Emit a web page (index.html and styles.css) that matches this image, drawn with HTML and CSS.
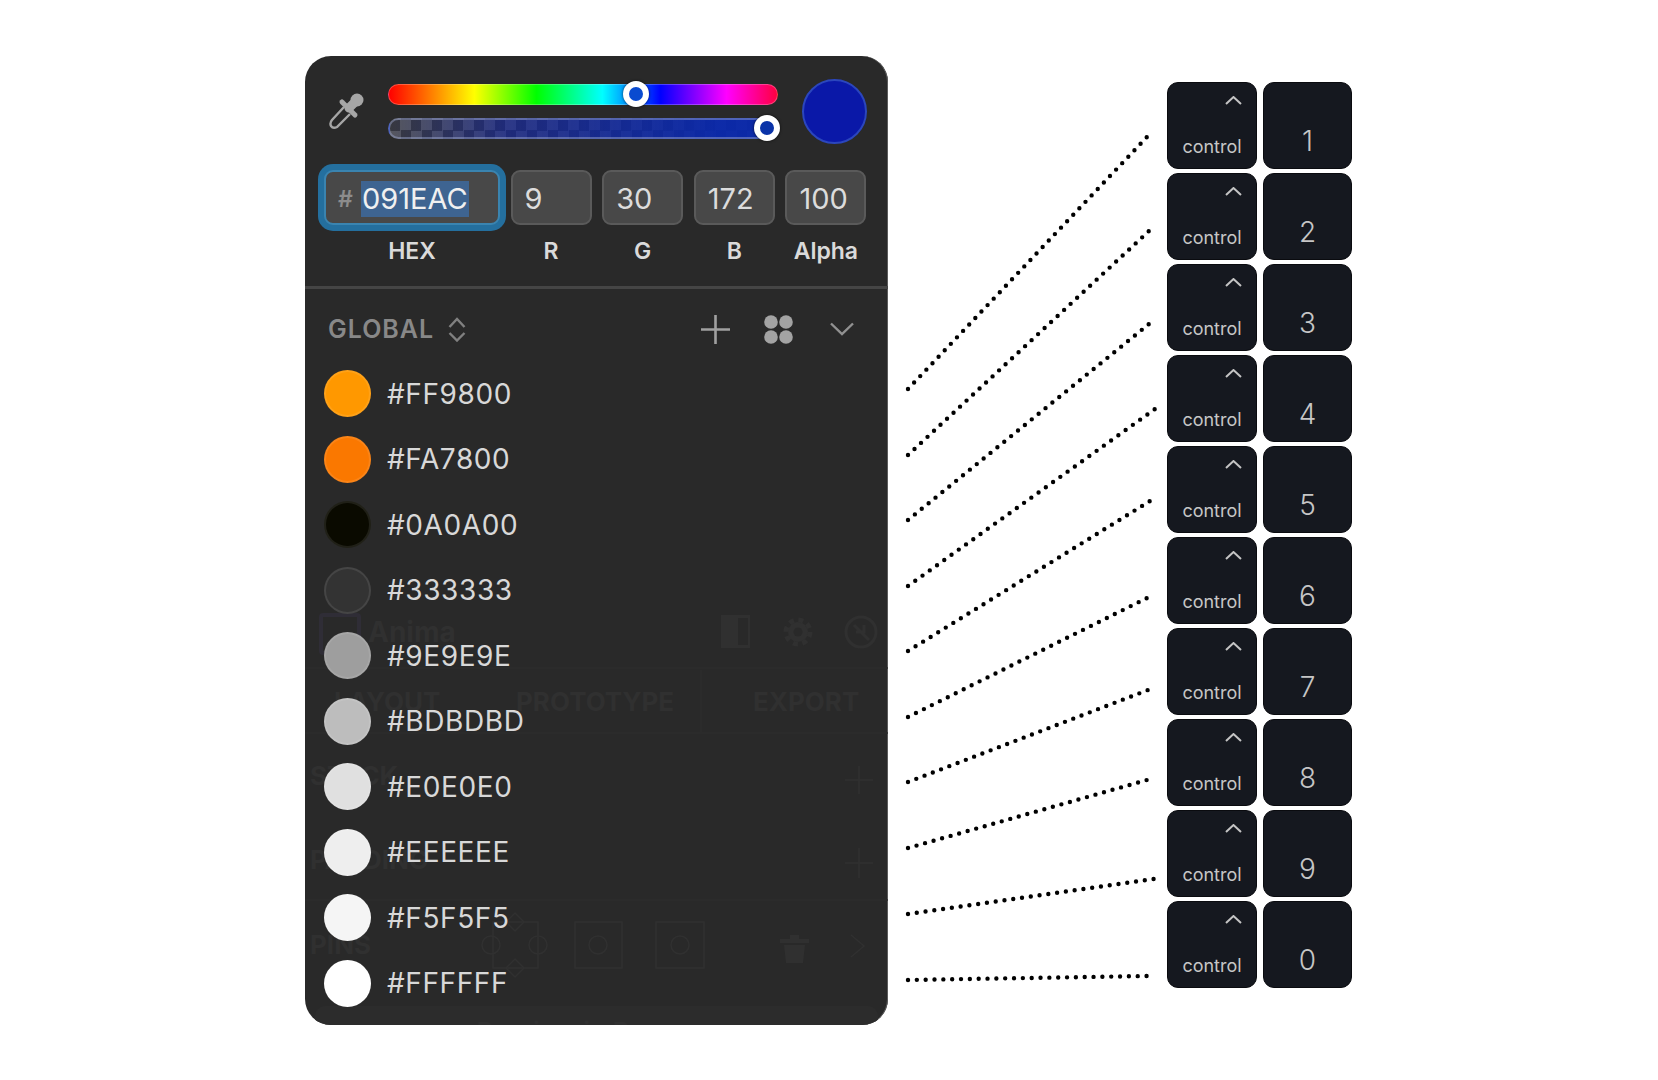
FILE: index.html
```html
<!DOCTYPE html>
<html>
  <head>
    <meta charset="utf-8">
    <title>Color picker shortcuts</title>
    <link rel="stylesheet" href="styles.css">
  </head>
  <body>
    <svg class="defs" width="0" height="0">
      <symbol id="caret" viewBox="0 0 17 9">
        <path d="M1 8 L8.5 1 L16 8" fill="none" stroke="#c4c4c4" stroke-width="2"/>
      </symbol>
    </svg>
    <div class="stage">
      <!-- Color picker panel -->
      <div class="panel">
        <!-- Plugin UI showing faintly through the panel -->
        <div class="ghost">
          <div class="ghost-logo"></div>
          <span class="ghost-text g-anima">Anima</span>
          <svg class="ghost-icons" width="583" height="969" viewBox="305 56 583 969">
            <g fill="#303030">
              <path d="M721 615h29v33h-29z"/>
              <circle cx="798" cy="632" r="10"/>
              <path d="M780 939h29v4h-29zM790 935h9v4h-9zM784 945h21l-2 18h-17z"/>
            </g>
            <circle cx="798" cy="632" r="12" fill="none" stroke="#303030" stroke-width="5" stroke-dasharray="5 4.420"/>
            <path d="M738 618h10v27h-10z" fill="#292929"/>
            <circle cx="798" cy="632" r="4.500" fill="#292929"/>
            <circle cx="861" cy="632" r="15" fill="none" stroke="#303030" stroke-width="3"/>
            <path d="M854 625l15 15M856 632h8v-7" fill="none" stroke="#303030" stroke-width="3"/>
            <path d="M305 668h583M305 733h583M701 670v63M305 900h583" fill="none" stroke="#2c2c2c" stroke-width="1.500"/>
            <g fill="none" stroke="#303030" stroke-width="1.500">
              <path d="M845 780h28M859 766v28M845 863h28M859 848v30"/>
              <path d="M851 935l13 11-13 11"/>
              <path d="M493 922h45v46h-45zM575 922h47v46h-47zM656 922h48v46h-48z"/>
              <circle cx="491" cy="945" r="9"/>
              <circle cx="538" cy="945" r="9"/>
              <circle cx="598" cy="945" r="9"/>
              <circle cx="680" cy="945" r="9"/>
              <path d="M515 913l9 9-9 9-9-9zM515 959l9 9-9 9-9-9z"/>
            </g>
          </svg>
          <span class="ghost-text g-layout">LAYOUT</span>
          <span class="ghost-text g-proto">PROTOTYPE</span>
          <span class="ghost-text g-export">EXPORT</span>
          <span class="ghost-text g-stack">STACK</span>
          <span class="ghost-text g-padding">PADDING</span>
          <span class="ghost-text g-pins">PINS</span>
          <div class="ghost-button">Preview in Browser</div>
        </div>

        <div class="picker">
          <svg class="dropper" width="36" height="37" viewBox="0 0 36 37">
            <path d="M15 14 L3 27 Q0.500 30 2 33 Q4 36 8 34 L21 21" fill="none" stroke="#a6a6a6" stroke-width="2.400"/>
            <path d="M13 9 L26 22" stroke="#a6a6a6" stroke-width="5" stroke-linecap="round"/>
            <path d="M20 15 L28 7" stroke="#a6a6a6" stroke-width="9" stroke-linecap="round"/>
            <circle cx="28" cy="7" r="6.500" fill="#a6a6a6"/>
          </svg>
          <div class="sliders">
            <div class="bar hue"><span class="thumb thumb-hue"></span></div>
            <div class="bar alpha"><span class="thumb thumb-alpha"></span></div>
          </div>
          <div class="current"></div>
        </div>

        <div class="fields">
          <div class="field hex"><span class="hash">#</span><span class="selected">091EAC</span></div>
          <div class="field">9</div>
          <div class="field">30</div>
          <div class="field">172</div>
          <div class="field">100</div>
          <div class="field-label">HEX</div>
          <div class="field-label">R</div>
          <div class="field-label">G</div>
          <div class="field-label">B</div>
          <div class="field-label">Alpha</div>
        </div>

        <div class="section-head">
          <span class="section-title">GLOBAL</span>
          <svg class="updown" width="18" height="25" viewBox="0 0 18 25">
            <path d="M1.500 10 L9 2 L16.500 10 M1.500 16 L9 23.500 L16.500 16" fill="none" stroke="#808080" stroke-width="2.400"/>
          </svg>
          <svg class="head-icon plus" width="29" height="29" viewBox="0 0 29 29">
            <path d="M0 14.500h29M14.500 0v29" stroke="#a0a0a0" stroke-width="2.600"/>
          </svg>
          <svg class="head-icon grid-icon" width="29" height="29" viewBox="0 0 29 29">
            <g fill="#a3a3a3">
              <circle cx="7" cy="7" r="6.800"/>
              <circle cx="22" cy="7" r="6.800"/>
              <circle cx="7" cy="22" r="6.800"/>
              <circle cx="22" cy="22" r="6.800"/>
            </g>
          </svg>
          <svg class="head-icon chevron" width="24" height="14" viewBox="0 0 24 14">
            <path d="M1 1.500 L12 12 L23 1.500" fill="none" stroke="#919191" stroke-width="2.400"/>
          </svg>
        </div>

        <!-- Color list -->
        <ul class="colors">
          <li><span class="dot c1"></span>#FF9800</li>
          <li><span class="dot c2"></span>#FA7800</li>
          <li><span class="dot c3"></span>#0A0A00</li>
          <li><span class="dot c4"></span>#333333</li>
          <li><span class="dot c5"></span>#9E9E9E</li>
          <li><span class="dot c6"></span>#BDBDBD</li>
          <li><span class="dot c7"></span>#E0E0E0</li>
          <li><span class="dot c8"></span>#EEEEEE</li>
          <li><span class="dot c9"></span>#F5F5F5</li>
          <li><span class="dot c10"></span>#FFFFFF</li>
        </ul>
      </div>

      <!-- Dotted lines from the colors to the shortcuts -->
      <svg class="links" width="279" height="969" viewBox="888 56 279 969">
        <g fill="none" stroke="#000" stroke-width="4.400" stroke-linecap="round" stroke-dasharray="0 1">
          <path pathLength="39.050" d="M908 389 L1147 137"/>
          <path pathLength="37.050" d="M908 455 L1149 231"/>
          <path pathLength="35.050" d="M908 520 L1149 324"/>
          <path pathLength="34.050" d="M908 586 L1155 409"/>
          <path pathLength="32.050" d="M908 651 L1150 501"/>
          <path pathLength="30.050" d="M908 717 L1147 598"/>
          <path pathLength="29.050" d="M908 782 L1148 690"/>
          <path pathLength="28.050" d="M908 848 L1147 780"/>
          <path pathLength="28.050" d="M908 914 L1154 879"/>
          <path pathLength="27.050" d="M908 980 L1147 976"/>
        </g>
      </svg>

      <!-- Keyboard shortcuts -->
      <div class="keys">
        <div class="key"><svg class="caret"><use href="#caret"/></svg><span class="key-name">control</span></div>
        <div class="key digit">1</div>
        <div class="key"><svg class="caret"><use href="#caret"/></svg><span class="key-name">control</span></div>
        <div class="key digit">2</div>
        <div class="key"><svg class="caret"><use href="#caret"/></svg><span class="key-name">control</span></div>
        <div class="key digit">3</div>
        <div class="key"><svg class="caret"><use href="#caret"/></svg><span class="key-name">control</span></div>
        <div class="key digit">4</div>
        <div class="key"><svg class="caret"><use href="#caret"/></svg><span class="key-name">control</span></div>
        <div class="key digit">5</div>
        <div class="key"><svg class="caret"><use href="#caret"/></svg><span class="key-name">control</span></div>
        <div class="key digit">6</div>
        <div class="key"><svg class="caret"><use href="#caret"/></svg><span class="key-name">control</span></div>
        <div class="key digit">7</div>
        <div class="key"><svg class="caret"><use href="#caret"/></svg><span class="key-name">control</span></div>
        <div class="key digit">8</div>
        <div class="key"><svg class="caret"><use href="#caret"/></svg><span class="key-name">control</span></div>
        <div class="key digit">9</div>
        <div class="key"><svg class="caret"><use href="#caret"/></svg><span class="key-name">control</span></div>
        <div class="key digit">0</div>
      </div>
    </div>
  </body>
</html>
```

FILE: styles.css
```css
/* Page */
body {
  margin: 0;
  background-color: #ffffff;
  font-family: "Inter", "Liberation Sans", sans-serif;
}
.defs {
  position: absolute;
}
.stage {
  display: flex;
  align-items: flex-start;
  padding: 56px 0 0 305px;
}

/* Panel */
.panel {
  position: relative;
  width: 583px;
  height: 969px;
  box-sizing: border-box;
  flex: none;
  overflow: hidden;
  background-color: #292929;
  border-radius: 26px;
  box-shadow: inset -1px 0 0 #5c5c5c;
  color: #dcdcdc;
}
.picker, .fields, .section-head, .colors {
  position: relative;
}

/* Faint layer behind the panel */
.ghost {
  position: absolute;
  inset: 0;
}
.ghost-icons {
  position: absolute;
  left: 0;
  top: 0;
}
.ghost-logo {
  position: absolute;
  left: 14px;
  top: 557px;
  width: 34px;
  height: 34px;
  border: 4px solid #2f2d36;
  border-radius: 4px;
}
.ghost-text {
  position: absolute;
  font-size: 26px;
  font-weight: 700;
  color: #303030;
}
.g-anima { left: 63px; top: 559px; font-size: 28px; }
.g-layout { left: 29px; top: 630px; }
.g-proto { left: 211px; top: 630px; }
.g-export { left: 448px; top: 630px; }
.g-stack { left: 5px; top: 704px; }
.g-padding { left: 5px; top: 788px; }
.g-pins { left: 5px; top: 873px; }
.ghost-button {
  position: absolute;
  left: 10px;
  right: 10px;
  top: 950px;
  height: 50px;
  padding-top: 10px;
  background-color: #2c2c2c;
  border-radius: 10px;
  font-size: 26px;
  font-weight: 600;
  text-align: center;
  color: #303030;
}

/* Sliders row */
.picker {
  display: flex;
  align-items: flex-start;
  height: 114px;
  padding-left: 24px;
}
.dropper {
  flex: none;
  margin-top: 37px;
}
.sliders {
  display: flex;
  flex-direction: column;
  gap: 13px;
  width: 390px;
  margin: 28px 0 0 23px;
}
.bar {
  position: relative;
  height: 21px;
  box-sizing: border-box;
  border-radius: 11px;
}
.hue {
  border: 1px solid rgba(255, 255, 255, 0.25);
  background: linear-gradient(to right, #ff0000, #ffff00 22%, #00ff00 38%, #00ffff 55%, #0000ff 70%, #ff00ff 87%, #ff0040 100%);
}
.alpha {
  border: 2px solid rgba(160, 170, 210, 0.45);
  background:
    linear-gradient(to right, rgba(9, 30, 172, 0.05), rgba(9, 30, 172, 0.55) 30%, rgba(9, 40, 172, 0.95) 85%),
    repeating-conic-gradient(#5a5a5a 0 25%, #3a3a3a 0 50%) 0 0 / 21px 21px;
}
.thumb {
  position: absolute;
  width: 26px;
  height: 26px;
  box-sizing: border-box;
  border: 6px solid #ffffff;
  border-radius: 50%;
  box-shadow: 0 0 3px rgba(0, 0, 0, 0.7);
}
.thumb-hue {
  left: 234px;
  top: -4px;
  background-color: #0a4bd0;
}
.thumb-alpha {
  left: 364px;
  top: -5px;
  background-color: #0a33a8;
}
.current {
  flex: none;
  width: 65px;
  height: 65px;
  box-sizing: border-box;
  margin: 23px 0 0 24px;
  background-color: #0a18a8;
  border: 2px solid #2b46bd;
  border-radius: 50%;
}

/* Hex and RGB fields */
.fields {
  display: grid;
  grid-template-columns: 176px repeat(4, 81px);
  column-gap: 10.6px;
  row-gap: 13px;
  padding: 0 0 22px 19px;
  border-bottom: 3px solid #454545;
}
.field {
  display: flex;
  align-items: center;
  height: 55px;
  box-sizing: border-box;
  padding: 2px 0 0 12px;
  background-color: #484848;
  border: 2px solid #5a5a5a;
  border-radius: 9px;
  font-size: 29px;
}
.hex {
  border-color: #3a84b0;
  box-shadow: 0 0 0 6px #246f9e;
}
.hash {
  width: 23px;
  font-size: 23px;
  font-weight: 600;
  color: #8c8c8c;
}
.selected {
  padding: 0 1px;
  line-height: 36px;
  background-color: #3e6491;
  color: #f0f0f0;
}
.field-label {
  font-size: 23px;
  font-weight: 600;
  line-height: 26px;
  text-align: center;
  color: #dadada;
}

/* Global header */
.section-head {
  display: flex;
  align-items: center;
  height: 72px;
  padding: 8px 0 0 23px;
  box-sizing: border-box;
}
.section-title {
  font-size: 25px;
  font-weight: 600;
  letter-spacing: 1px;
  color: #888888;
}
.updown {
  margin-left: 14px;
}
.plus {
  margin-left: auto;
}
.grid-icon {
  margin-left: 34px;
}
.chevron {
  margin: 0 34px 0 37px;
}

/* Color list */
.colors {
  margin: 0;
  padding: 0;
  list-style: none;
}
.colors li {
  display: flex;
  align-items: center;
  height: 65.5px;
  padding-left: 19px;
  font-size: 28px;
  letter-spacing: 0.6px;
  color: #d8d8d8;
}
.dot {
  flex: none;
  width: 47px;
  height: 47px;
  box-sizing: border-box;
  margin-right: 16px;
  border: 2px solid rgba(255, 255, 255, 0.09);
  border-radius: 50%;
}
.c1 { background-color: #ff9800; }
.c2 { background-color: #fa7800; }
.c3 { background-color: #0a0a00; }
.c4 { background-color: #333333; }
.c5 { background-color: #9e9e9e; }
.c6 { background-color: #bdbdbd; }
.c7 { background-color: #e0e0e0; }
.c8 { background-color: #eeeeee; }
.c9 { background-color: #f5f5f5; }
.c10 { background-color: #ffffff; }

/* Dotted links */
.links {
  flex: none;
}

/* Keys */
.keys {
  display: grid;
  grid-template-columns: 90px 89px;
  grid-auto-rows: 87px;
  column-gap: 6px;
  row-gap: 4px;
  margin-top: 26px;
}
.key {
  display: flex;
  flex-direction: column;
  align-items: center;
  box-sizing: border-box;
  padding-top: 13px;
  background-color: #15181f;
  border: 1px solid #0a0b0f;
  border-radius: 11px;
  color: #c6c6c6;
}
.caret {
  width: 17px;
  height: 9px;
  align-self: flex-end;
  margin-right: 14px;
}
.key-name {
  margin-top: 31px;
  font-size: 18px;
}
.digit {
  justify-content: flex-end;
  padding: 0 0 10px;
  font-size: 28px;
  font-weight: 300;
}
```
